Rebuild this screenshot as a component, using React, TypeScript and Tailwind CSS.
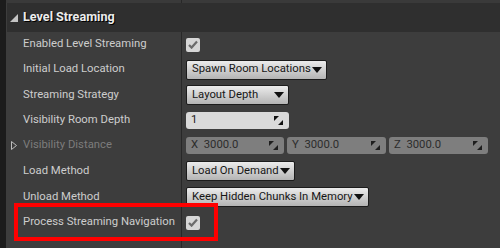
import React from "react";

const font = { fontFamily: "Roboto, 'Liberation Sans', sans-serif" };

function Check() {
  return (
    <div className="flex h-[14px] w-[14px] items-center justify-center rounded-[2px] bg-[#d6d6d6]">
      <svg width="10" height="9" viewBox="0 0 10 9">
        <path d="M1 5 L3.6 7.6 L9 1.6" fill="none" stroke="#6b6b6b" strokeWidth="2.2" />
      </svg>
    </div>
  );
}

function Arrow() {
  return (
    <svg width="10" height="6" viewBox="0 0 10 6" className="shrink-0">
      <path d="M0 0 H10 L5 6 Z" fill="#111" />
    </svg>
  );
}

function Combo({ label, w, gap }: { label: string; w: string; gap?: boolean }) {
  return (
    <div
      className={`flex h-[20px] items-center whitespace-nowrap rounded-[2px] border border-[#1c1c1c] bg-gradient-to-b from-[#ececec] to-[#b4b4b4] pl-[5px] pr-[4px] text-[11.3px] text-[#161616] ${w} ${gap ? "justify-between" : "gap-[1px]"}`}
    >
      <span>{label}</span>
      <Arrow />
    </div>
  );
}

function Spin({ dark }: { dark?: boolean }) {
  const c = dark ? "#1e1e1e" : "#111";
  return (
    <svg width="9" height="9" viewBox="0 0 9 9" className="shrink-0">
      <path d="M0 0 H5 L0 5 Z" fill={c} />
      <path d="M9 9 H4 L9 4 Z" fill={c} />
    </svg>
  );
}

function NumBox({ axis, value, w }: { axis: string; value: string; w: string }) {
  return (
    <div className={`flex h-[17px] items-center justify-between whitespace-nowrap rounded-[3px] bg-[#7e7e7e] pl-[5px] pr-[6px] text-[11.3px] text-[#2c2c2c] ${w}`}>
      <span>
        {axis}&nbsp;&nbsp;{value}
      </span>
      <Spin dark />
    </div>
  );
}

function Row({
  label,
  h,
  dim,
  expander,
  children,
}: {
  label: string;
  h: string;
  dim?: boolean;
  expander?: boolean;
  children: React.ReactNode;
}) {
  return (
    <div className={`flex ${h}`}>
      <div className={`flex w-[176px] items-center whitespace-nowrap border-r border-[#282828] text-[11.3px] ${dim ? "text-[#7c7c7c]" : "text-[#cdcdcd]"}`}>
        <span className="flex w-[13px] justify-center pl-[2px]">
          {expander && (
            <svg width="6" height="9" viewBox="0 0 6 9">
              <path d="M0.5 0.5 L5.5 4.5 L0.5 8.5 Z" fill="none" stroke="#bdbdbd" strokeWidth="1" />
            </svg>
          )}
        </span>
        <span className="pl-[4px]">{label}</span>
      </div>
      <div className="flex flex-1 items-center gap-[3px] pl-[4px]">{children}</div>
    </div>
  );
}

export default function App() {
  return (
    <div className="relative flex h-[248px] w-[500px] overflow-hidden bg-[#3d3d3d]" style={font}>
      <div className="w-[6px] shrink-0 bg-[#1c1c1c]" />
      <div className="flex flex-1 flex-col">
        <div className="flex h-[3px] bg-[#3a3a3a]">
          <div className="w-[176px] border-r border-[#282828]" />
        </div>
        <div className="ml-[1px] flex h-[29px] items-center gap-[5px] bg-[#2f2f2f] pl-[3px]">
          <svg width="8" height="8" viewBox="0 0 8 8">
            <path d="M8 0 V8 H0 Z" fill="#c4c4c4" />
          </svg>
          <span className="whitespace-nowrap text-[12.6px] font-bold text-[#ececec] [text-shadow:1px_1px_0_#000]">Level Streaming</span>
        </div>
        <Row label="Enabled Level Streaming" h="h-[25px]">
          <Check />
        </Row>
        <Row label="Initial Load Location" h="h-[25px]">
          <Combo label="Spawn Room Locations" w="" />
        </Row>
        <Row label="Streaming Strategy" h="h-[26px]">
          <Combo label="Layout Depth" w="w-[103px]" gap />
        </Row>
        <Row label="Visibility Room Depth" h="h-[25px]">
          <div className="flex h-[17px] w-[103px] items-center justify-between rounded-[3px] bg-[#dadada] pl-[5px] pr-[6px] text-[11.3px] text-[#1a1a1a]">
            <span>1</span>
            <Spin />
          </div>
        </Row>
        <Row label="Visibility Distance" h="h-[25px]" dim expander>
          <NumBox axis="X" value="3000.0" w="w-[98px]" />
          <NumBox axis="Y" value="3000.0" w="w-[99px]" />
          <NumBox axis="Z" value="3000.0" w="w-[99px]" />
        </Row>
        <Row label="Load Method" h="h-[26px]">
          <Combo label="Load On Demand" w="" />
        </Row>
        <Row label="Unload Method" h="h-[26px]">
          <Combo label="Keep Hidden Chunks In Memory" w="" />
        </Row>
        <Row label="Process Streaming Navigation" h="h-[25px]">
          <Check />
        </Row>
        <div className="flex flex-1">
          <div className="w-[176px] border-r border-[#282828]" />
        </div>
      </div>
      <div className="pointer-events-none absolute left-[14px] top-[203px] h-[38px] w-[204px] border-[4px] border-[#ff0000]" />
    </div>
  );
}
